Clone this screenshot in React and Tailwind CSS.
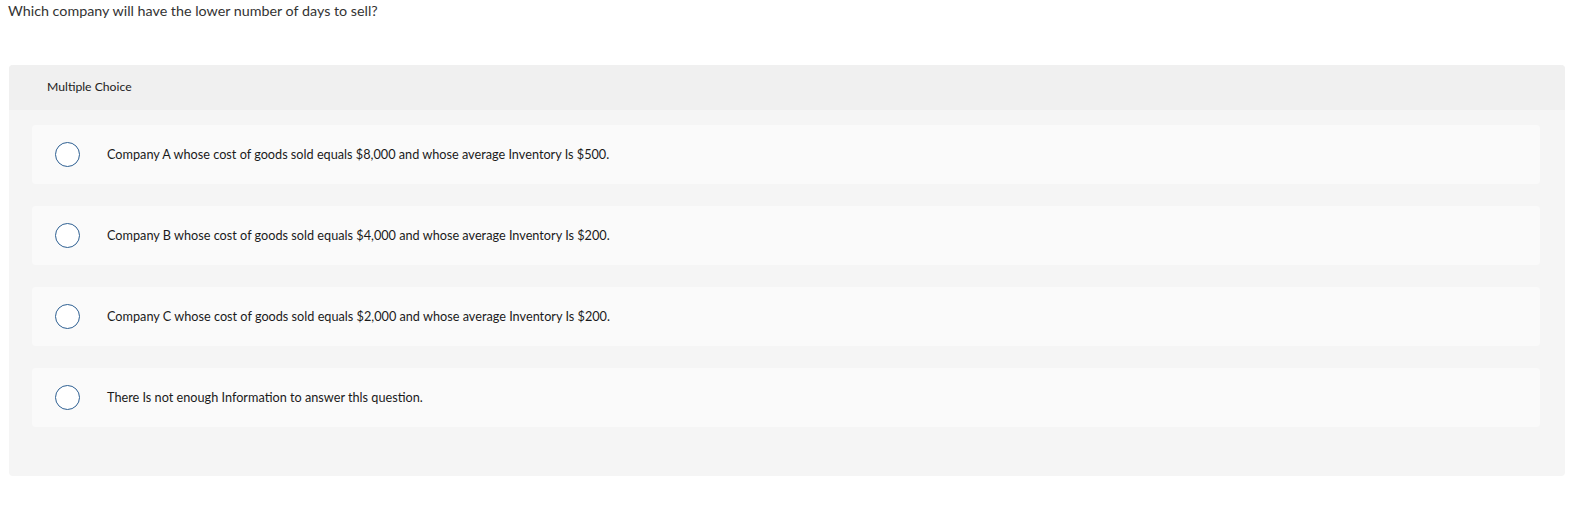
const options = [
  "Company A whose cost of goods sold equals $8,000 and whose average Inventory Is $500.",
  "Company B whose cost of goods sold equals $4,000 and whose average Inventory Is $200.",
  "Company C whose cost of goods sold equals $2,000 and whose average Inventory Is $200.",
  "There Is not enough Information to answer thls question.",
];

export default function App() {
  return (
    <div className="min-h-screen bg-white font-['Lato',sans-serif]">
      {/* question */}
      <div className="px-[8px] pt-[2px] h-[65px] text-[14.3px] leading-[18px] text-[#333]">
        Which company will have the lower number of days to sell?
      </div>

      {/* choices panel */}
      <div className="mx-[9px] mr-[21px] rounded-[4px] bg-[#f5f5f5] overflow-hidden">
        <div className="h-[45px] bg-[#f0f0f0] flex items-center pl-[38px] text-[12.2px] text-[#222]">
          Multiple Choice
        </div>
        <div className="flex flex-col gap-[22px] pt-[15px] pb-[49px] pl-[23px] pr-[25px]">
          {options.map((opt) => (
            <div key={opt} className="h-[59px] rounded-[4px] bg-[#fafafa] flex items-center">
              <div className="ml-[23px] w-[25px] h-[25px] rounded-full border-[1.5px] border-[#2d5f92] bg-white shrink-0" />
              <div className="ml-[27px] text-[12.7px] text-[#1a1a1a]">{opt}</div>
            </div>
          ))}
        </div>
      </div>
    </div>
  );
}
